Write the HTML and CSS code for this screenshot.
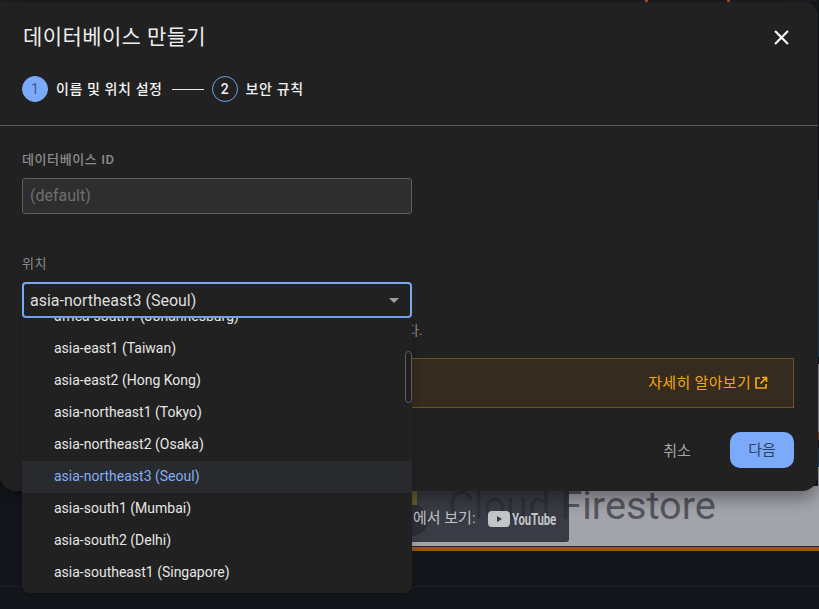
FILE: index.html
```html
<!DOCTYPE html>
<html lang="ko">
<head>
<meta charset="utf-8">
<title>데이터베이스 만들기</title>
<link rel="stylesheet" href="styles.css">
</head>
<body>
<main class="backdrop">
  <div class="top-marks"><span class="mark"></span><span class="mark"></span></div>
  <div class="thumb">
    <span class="thumb-title">Cloud Firestore</span>
    <div class="watch-bar">
      <span class="thumb-avatar"></span>
      <span class="thumb-flag"></span>
      <span class="watch-text">에서 보기:</span>
      <svg class="yt-icon" viewBox="0 0 22 16" width="22" height="16" aria-hidden="true"><rect width="22" height="16" rx="4" fill="#c4c5c9"/><path d="M9 5l5 3-5 3z" fill="#3a3c43"/></svg>
      <span class="yt-name">YouTube</span>
    </div>
  </div>
  <div class="thumb-rule"></div>
  <div class="footer-rule"></div>
</main>
<div class="edge-strip"></div>

<section class="dialog">
  <header class="dialog-head">
    <h1 class="dialog-title">데이터베이스 만들기</h1>
    <svg class="close" viewBox="0 0 14 14" width="15" height="15" aria-hidden="true"><path d="M1 1l12 12M13 1L1 13" stroke="#fff" stroke-width="2" fill="none"/></svg>
  </header>
  <div class="stepper">
    <span class="step-dot step-dot-active">1</span>
    <span class="step-label">이름 및 위치 설정</span>
    <span class="step-line"></span>
    <span class="step-dot">2</span>
    <span class="step-label">보안 규칙</span>
  </div>
  <div class="divider"></div>
  <div class="form">
    <label class="field-label">데이터베이스 ID</label>
    <div class="input">(default)</div>
    <label class="field-label field-label-loc">위치</label>
    <div class="select-wrap">
      <div class="select">
        <span>asia-northeast3 (Seoul)</span>
        <span class="caret"></span>
      </div>
      <div class="menu">
        <div class="menu-scroll">
          <div class="opt">africa-south1 (Johannesburg)</div>
          <div class="opt">asia-east1 (Taiwan)</div>
          <div class="opt">asia-east2 (Hong Kong)</div>
          <div class="opt">asia-northeast1 (Tokyo)</div>
          <div class="opt">asia-northeast2 (Osaka)</div>
          <div class="opt opt-selected">asia-northeast3 (Seoul)</div>
          <div class="opt">asia-south1 (Mumbai)</div>
          <div class="opt">asia-south2 (Delhi)</div>
          <div class="opt">asia-southeast1 (Singapore)</div>
        </div>
        <span class="scroll-thumb"></span>
      </div>
    </div>
    <p class="helper">다.</p>
    <div class="notice">
      <a class="notice-link">자세히 알아보기<svg class="ext" viewBox="0 0 14 14" width="14" height="14" aria-hidden="true"><path d="M6 2H2v10h10V8M8 1.500h4.500V6M12 2L6.500 7.500" stroke="#f2a60c" stroke-width="1.700" fill="none"/></svg></a>
    </div>
  </div>
  <footer class="actions">
    <button class="btn-cancel">취소</button>
    <button class="btn-next">다음</button>
  </footer>
</section>
</body>
</html>
```
FILE: styles.css
```css
* { box-sizing: border-box; }
html, body { margin: 0; height: 100%; }
body {
  width: 819px;
  height: 609px;
  overflow: hidden;
  position: relative;
  background: #13171c;
  font-family: Roboto, "Noto Sans CJK KR", sans-serif;
}
.backdrop { display: flex; flex-direction: column; height: 609px; }
.top-marks { height: 2px; display: flex; gap: 79px; padding-left: 645px; background: #1a1c20; }
.mark { width: 3px; height: 2px; background: #a8452c; }
.thumb {
  margin-top: 484px;
  margin-left: 412px;
  height: 61px;
  background: #a2a3ab;
  position: relative;
  border-bottom: 1px solid #23252b;
}
.thumb-title {
  position: absolute;
  left: 36px;
  top: -4px;
  font-size: 39.7px;
  line-height: 48px;
  color: #55565c;
  white-space: nowrap;
}
.watch-bar {
  position: absolute;
  left: 0;
  top: 0;
  width: 157px;
  height: 56px;
  background: rgba(40, 42, 50, 0.85);
  border-radius: 0 0 3px 0;
  display: flex;
  align-items: center;
  padding-top: 10px;
}
.thumb-flag { position: absolute; left: 0; top: 5px; width: 5px; height: 14px; background: #6e6232; }
.thumb-avatar { position: absolute; left: -16px; top: 18px; width: 32px; height: 32px; border-radius: 50%; background: #2c2e35; }
.watch-text { position: relative; flex: none; font-size: 15px; line-height: 20px; padding-bottom: 3px; color: #c0c1c5; white-space: nowrap; width: 75px; margin-left: 1px; }
.yt-icon { position: relative; flex: none; margin-right: 2px; }
.yt-name { position: relative; flex: none; font-size: 16px; font-weight: 700; color: #c4c5c9; transform: scaleX(0.71); transform-origin: left; letter-spacing: -0.2px; }
.thumb-rule { height: 4px; margin-left: 412px; background: #9c5316; }
.footer-rule { height: 1px; margin-top: 35px; background: #1c2026; }
.edge-strip {
  position: absolute;
  right: 0;
  top: 0;
  width: 1px;
  height: 486px;
  background: linear-gradient(#101317 0 200px, #1b4668 200px 357px, #15171b 357px 364px, #8f8f96 364px 432px, #8a4030 432px 440px, #15171b 440px 448px, #1b4668 448px 467px, #a2a3ab 467px);
}

.dialog {
  position: absolute;
  left: 0;
  top: 2px;
  width: 818px;
  height: 489px;
  background: #212121;
  border-radius: 0 14px 16px 16px;
  box-shadow: 0 8px 16px rgba(0, 0, 0, 0.35);
  color: #e8eaed;
}
.dialog-head {
  display: flex;
  align-items: center;
  justify-content: space-between;
  padding: 19px 29px 0 23px;
  height: 51px;
}
.dialog-title { margin: 0; font-size: 21px; letter-spacing: 0.4px; line-height: 30px; font-weight: 400; color: #eeeeee; }
.stepper { display: flex; align-items: center; height: 26px; margin: 23px 0 0 22px; }
.step-dot {
  width: 26px;
  height: 26px;
  border-radius: 50%;
  border: 1px solid #6f9fea;
  display: flex;
  align-items: center;
  justify-content: center;
  font-size: 14px;
  font-weight: 500;
  color: #f1f3f4;
}
.step-dot-active { background: #7baafb; border-color: #7baafb; color: #3f5c8c; font-weight: 400; }
.step-label { margin: 0 0 3px 8px; font-size: 14px; letter-spacing: 0.6px; font-weight: 500; color: #f1f1f1; white-space: nowrap; }
.step-line { width: 32px; height: 1px; background: #e8e8e8; margin: 0 8px 0 9px; }
.divider { height: 1px; margin-top: 23px; background: #5c5c5c; }
.form { padding: 0 24px 0 22px; }
.field-label { display: block; font-size: 13px; letter-spacing: 0.6px; line-height: 16px; font-weight: 500; color: #8c8c8c; margin-top: 26px; }
.field-label-loc { margin-top: 42px; font-weight: 400; }
.input {
  width: 390px;
  height: 36px;
  margin-top: 10px;
  padding: 0 7px 2px;
  display: flex;
  align-items: center;
  background: #2e2e2e;
  border: 1px solid #5a5d62;
  border-radius: 3px;
  font-size: 16px;
  color: #6e6e6e;
}
.select-wrap { position: relative; width: 390px; margin-top: 10px; }
.select {
  height: 36px;
  padding: 0 11px 0 6px;
  display: flex;
  align-items: center;
  justify-content: space-between;
  border: 2px solid #78a8f4;
  border-radius: 4px;
  font-size: 16px;
  color: #dedede;
}
.caret { width: 0; height: 0; border-left: 5.5px solid transparent; border-right: 5.5px solid transparent; border-top: 5px solid #9e9e9e; }
.menu {
  position: absolute;
  left: 0;
  top: 36px;
  width: 390px;
  height: 275px;
  background: #212121;
  border-radius: 0 0 8px 8px;
  box-shadow: 0 2px 8px rgba(0, 0, 0, 0.2);
  overflow: hidden;
  z-index: 2;
}
.menu-scroll { margin-top: -17px; }
.opt { height: 32px; padding: 0 0 2px 32px; display: flex; align-items: center; font-size: 14px; color: #e6e6e6; white-space: nowrap; }
.opt-selected { background: #292a2d; color: #84aef5; }
.scroll-thumb {
  position: absolute;
  right: 0;
  top: 33px;
  width: 7px;
  height: 52px;
  background: #1e1e1e;
  border: 1px solid #5e5e5e;
  border-radius: 4px;
}
.helper { margin: 6px 0 0 385px; font-size: 13px; line-height: 14px; color: #8c8c8c; white-space: nowrap; height: 14px; }
.notice {
  width: 772px;
  height: 50px;
  margin-top: 20px;
  display: flex;
  align-items: center;
  justify-content: flex-end;
  padding-right: 25px;
  background: #352b1f;
  border: 1px solid #6d5417;
}
.notice-link { display: flex; align-items: center; gap: 3px; padding-bottom: 3px; font-size: 15px; letter-spacing: 0.3px; color: #f2a60c; white-space: nowrap; }
.ext { margin-top: 3px; }
.actions { display: flex; justify-content: flex-end; align-items: center; gap: 33px; padding-right: 24px; margin-top: 24px; }
.btn-cancel, .btn-next { font-family: inherit; font-size: 15px; border: 0; padding: 0 0 3px; }
.btn-cancel { background: none; color: #a6a6a6; width: 40px; padding-bottom: 2px; }
.btn-next { width: 64px; height: 36px; border-radius: 10px; background: #7baafb; color: #2e3f5c; }
```
